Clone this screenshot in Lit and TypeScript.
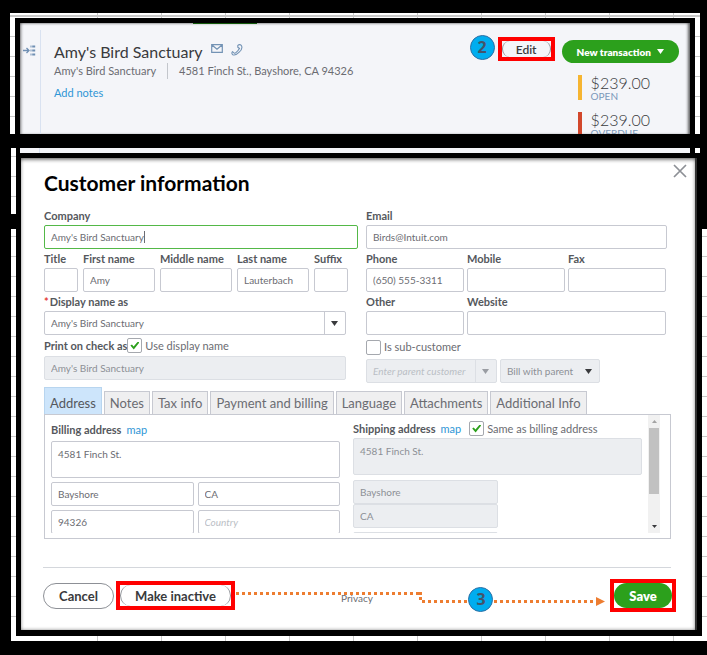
import { LitElement, html, css, svg, nothing } from "lit";
import { customElement, state } from "lit/decorators.js";
import { classMap } from "lit/directives/class-map.js";

const TABS = ["Address", "Notes", "Tax info", "Payment and billing", "Language", "Attachments", "Additional Info"];

const arrow = svg`<path d="M0 0h7L3.5 5z" fill="currentColor" />`;

@customElement("app-root")
export class AppRoot extends LitElement {
  @state() private tab = "Address";

  static styles = css`
    :host {
      display: block;
      box-sizing: border-box;
      min-height: 100vh;
      overflow: hidden;
      background: #000;
      padding: 13px 0 14px;
      font-family: Lato, "Noto Sans", sans-serif;
      font-size: 11px;
      line-height: 16px;
      color: #55585d;
    }
    *, *::before { box-sizing: border-box; }
    button, input, select, textarea { font: inherit; color: inherit; margin: 0; }
    button { cursor: pointer; padding: 0; }
    a { color: #2f96d6; text-decoration: none; }
    h1, h2, p, dl, dd, dt { margin: 0; font-weight: 400; }

    /* spreadsheet cells behind both captures */
    .sheet {
      margin: 0 7px 0 10px;
      padding: 5px 5px 0;
      background:
        linear-gradient(#c9c9c9, #c9c9c9) 0 3px / 100% 1px no-repeat,
        repeating-linear-gradient(#0000 0 19px, #c9c9c9 19px 20px) 0 4px,
        repeating-linear-gradient(90deg, #0000 0 63px, #c9c9c9 63px 64px) 24px 0,
        #fff;
    }
    .customer {
      display: flex;
      height: 116px;
      overflow: hidden;
      border: 5px solid #000;
      border-bottom: 0;
      background:
        linear-gradient(#1c7c12, #1c7c12) 173px 0 / 64px 1px no-repeat,
        #f4f5f9;
      box-shadow: inset -3px 1px 3px -1px #0009, inset 2px 0 3px -1px #0008;
    }
    .rail {
      flex: none;
      width: 21px;
      margin-top: 7px;
      padding: 15px 0 0 3px;
      border-right: 1px solid #d9e2f1;
    }
    .rail svg { display: block; }
    .who { flex: 1; padding: 18px 0 0 13px; }
    .name { display: flex; gap: 8px; }
    .name h1 { font-size: 16px; line-height: 22px; color: #393a3d; }
    .name svg { display: block; margin-top: 3px; }
    .facts { display: flex; line-height: 16px; color: #6b6c72; }
    .facts span + span { margin-left: 11px; padding-left: 11px; border-left: 1px solid #c3c6cc; }
    .notes { display: inline-block; margin-top: 6px; }
    .side { flex: none; padding: 12px 11px 0 0; }
    .actions { display: flex; align-items: flex-start; gap: 3px; }
    .badge {
      flex: none;
      width: 25px;
      height: 25px;
      border: 1px solid #2c6fa5;
      border-radius: 50%;
      background: #00adef;
      color: #44546a;
      font: 700 16px/23px "Open Sans", sans-serif;
      text-align: center;
    }
    .mark { border: 4px solid #f00; }
    .mark button { display: block; }
    .pill {
      height: 26px;
      border: 1px solid #8d9096;
      border-radius: 13px;
      background: #fff;
      color: #393a3d;
      font-size: 13px;
      font-weight: 700;
    }
    .mark.edit { margin-top: 2px; height: 24px; }
    .edit .pill { width: 49px; height: 16px; border-width: 0 1px; border-radius: 8px; background: none; font-size: 12px; line-height: 18px; font-weight: 600; }
    .pill.green { border: 0; background: #2ca01c; color: #fff; }
    .pill.new {
      display: flex;
      align-items: center;
      gap: 6px;
      height: 23px;
      margin: 5px 0 0 4px;
      padding: 0 15px;
      font-size: 10px;
      font-weight: 800;
    }
    .money { display: grid; gap: 12px; margin: 12px 0 0 108px; }
    .money div { display: flex; flex-direction: column; height: 25px; padding-left: 9px; border-left: 4px solid #f6b532; }
    .money .late { border-color: #d2472c; }
    .money dd { font-size: 16px; line-height: 16px; color: #393a3d; font-weight: 300; }
    .money dt { order: 1; font-size: 10px; line-height: 10px; color: #7b98b9; }

    .lower {
      margin: 14px 0 0 11px;
      padding-bottom: 5px;
      background:
        linear-gradient(#000, #000) 100% 0 / 12px 81px no-repeat,
        linear-gradient(#000, #000) 0 66px / 100% 15px no-repeat,
        repeating-linear-gradient(#0000 0 19px, #c9c9c9 19px 20px) 0 -11px,
        repeating-linear-gradient(90deg, #0000 0 63px, #c9c9c9 63px 64px) 23px 0,
        #fff;
    }
    .peek { display: flex; height: 5px; margin: 0 7px 0 5px; border-left: 4px solid #000; }
    .peek::before { content: ""; width: 20px; border-right: 1px solid #d9e2f1; background: #f4f5f9; }
    .peek i { flex: 1; background: #f4f5f9; border-right: 5px solid #000; }
    .peek b { width: 5px; background: #fff; }

    .modal {
      position: relative;
      margin: 0 5px;
      padding: 12px 26px 18px 23px;
      border: solid #000;
      border-width: 5px 5px 6px;
      background: #fff;
      box-shadow: inset -2px 0 #333, inset -1px 1px 4px #000b;
    }
    .modal h2 { font-size: 21px; line-height: 26px; font-weight: 700; color: #000; }
    .close { position: absolute; top: 6px; right: 10px; width: 14px; height: 14px; border: 0; background: none; }
    .close svg { display: block; }

    .form { display: grid; grid-template-columns: 314fr 301fr; gap: 8px; padding-right: 4px; margin-top: 10px; }
    .row { display: grid; column-gap: 5px; }
    .names { grid-template-columns: 34fr 72fr 72fr 72fr 34fr; margin-right: 10px; }
    .short { margin-right: 12px; }
    .three { grid-template-columns: repeat(3, 1fr); column-gap: 3px; margin-right: 1px; }
    .wide { grid-column: span 2; }
    .field { display: block; min-width: 0; font-weight: 700; white-space: nowrap; }
    .field > span { display: block; line-height: 19px; }
    .req::before { content: "*"; margin-right: 1px; color: #e43834; }
    input:not([type]), select, textarea {
      display: block;
      width: 100%;
      min-width: 0;
      height: 24px;
      padding: 0 6px;
      border: 1px solid #c7c9d1;
      border-radius: 2px;
      background: #fff;
      color: #6b6c72;
      font-size: 10px;
      font-weight: 400;
      outline: 0;
      appearance: none;
      resize: none;
    }
    textarea { height: 37px; padding: 5px 6px; line-height: 14px; overflow: hidden; }
    input.active { border-color: #53b847; }
    input:not([type]):disabled, select:disabled, textarea:disabled {
      border-color: #dcdfe4;
      background: #eceef1;
      color: #8d9096;
      opacity: 1;
    }
    ::placeholder { color: #babec5; font-style: italic; opacity: 1; }
    .caret { display: block; position: relative; }
    .caret::after {
      content: "";
      position: absolute;
      inset: 6px auto 6px 100px;
      border-left: 1px solid #6b6c72;
    }
    .combo { display: flex; position: relative; color: #393a3d; }
    .combo svg { position: absolute; right: 8px; top: 10px; pointer-events: none; }
    .combo::after { content: ""; position: absolute; inset: 1px 21px 1px auto; border-left: 1px solid #c7c9d1; }
    .combo.plain::after { display: none; }
    .combo.off { color: #9a9da3; }
    .combo.off::after { border-color: #dcdfe4; }
    .line { display: flex; align-items: center; white-space: nowrap; }
    .print { height: 21px; }
    .print label:first-child { font-weight: 700; }
    .tick { display: flex; align-items: center; gap: 3px; color: #6b6c72; }
    .tick input {
      display: grid;
      place-items: center;
      width: 15px;
      height: 15px;
      margin: 0;
      border: 1px solid #a5a8ae;
      border-radius: 2px;
      background: #fff;
      appearance: none;
    }
    .tick input:checked::before {
      content: "";
      width: 9px;
      height: 8px;
      background: #2ca01c;
      clip-path: polygon(0 50%, 18% 36%, 36% 62%, 84% 0, 100% 14%, 38% 100%);
    }
    .sub { height: 24px; }
    .parents { display: grid; grid-template-columns: 131fr 100fr; gap: 3px; margin-right: 67px; }

    .tabs { display: flex; align-items: flex-end; gap: 2px; height: 27px; margin-top: 4px; }
    .tab {
      height: 23px;
      padding: 0 5px;
      border: 1px solid #c7c9d1;
      border-bottom: 0;
      background: #efeff0;
      color: #6b6c72;
      font-size: 13px;
      line-height: 22px;
      white-space: nowrap;
    }
    .tab.on { height: 27px; padding-top: 4px; background: #cde5fb; border-color: #b8d5ef; color: #55585d; }
    .panel { padding: 0 10px 5px 6px; border: 1px solid #c7c9d1; }
    .view { display: grid; grid-template-columns: 302fr 295fr 12px; height: 118px; overflow: hidden; }
    .col { display: grid; grid-template-columns: minmax(0, 1fr); align-content: start; min-width: 0; margin-right: 6px; }
    .bill { margin-right: 13px; row-gap: 4px; padding-top: 4px; }
    .title { height: 22px; gap: 5px; margin-bottom: -4px; }
    .title > label { font-weight: 700; }
    .pair { display: grid; grid-template-columns: 1fr 1fr; gap: 4px; }
    .ship { padding-top: 4px; }
    .ship .title { height: 19px; margin: 0; }
    .ship .tick { margin-left: 3px; font-weight: 400; }
    .half { display: grid; width: 50%; margin-top: 5px; }
    .half + .half { margin-top: 4px; }
    .scroll { display: flex; flex-direction: column; align-items: center; height: 118px; padding: 5px 0; background: #f1f1f1; color: #a3a3a3; }
    .scroll i { width: 10px; height: 66px; margin: 5px 0 auto; background: #c1c1c1; }
    .scroll svg + i + svg { color: #393a3d; }

    .foot {
      position: relative;
      display: grid;
      grid-template-columns: 1fr auto 1fr;
      align-items: center;
      margin: 28px 0 0 -1px;
      padding-top: 12px;
    }
    .foot::before { content: ""; position: absolute; inset: 0 0 auto; border-top: 1px solid #d4d7dc; }
    .left { display: flex; align-items: center; gap: 2px; }
    .cancel { width: 71px; }
    .idle .pill { width: 111px; height: 21px; border-width: 0 1px; line-height: 20px; }
    .privacy { color: #6b6c72; font-size: 10px; margin-top: 4px; }
    .save { justify-self: end; margin-right: -5px; }
    .save .pill { width: 58px; height: 25px; font-weight: 800; }
    .path { position: absolute; inset: 25px 66px auto 193px; display: flex; color: #ed7d31; }
    .path i { flex: 184; height: 3px; background: repeating-linear-gradient(90deg, currentColor 0 3px, #0000 3px 6px); }
    .path .drop { flex: none; width: 3px; height: 8px; background: repeating-linear-gradient(currentColor 0 3px, #0000 3px 5px); }
    .path .low { flex: 174; margin-top: 8px; }
    .path svg { margin-top: 5px; }
    .path .badge { position: absolute; top: -5px; left: 63%; }
  `;

  private field(label: string, value = "", cls = "") {
    return html`<label class="field ${cls}"><span>${label}</span><input .value=${value} /></label>`;
  }

  private arrow(w = 7) {
    return html`<svg width=${w} height="5" viewBox="0 0 7 5" aria-hidden="true">${arrow}</svg>`;
  }

  private renderCustomer() {
    return html`
      <div class="sheet">
        <section class="customer">
          <div class="rail">
            <svg width="13" height="11" viewBox="0 0 13 11" fill="none" stroke="#6f8fb3" aria-hidden="true">
              <path stroke-width="1.300" d="M0 5.500h5.500M3.500 3l2.500 2.500L3.500 8" />
              <path stroke-width="2" d="M7.500 1.500h1M9.200 1.500h3M7.500 5.500h1M9.200 5.500h3M7.500 9.500h1M9.200 9.500h3" />
            </svg>
          </div>
          <div class="who">
            <div class="name">
              <h1>Amy's Bird Sanctuary</h1>
              <svg width="12" height="9" viewBox="0 0 12 9" fill="none" stroke="#7393b5" stroke-width="1.200" aria-hidden="true">
                <path d="M.7.7h10.600v7.600H.7zM1 1l5 4.200L11 1" />
              </svg>
              <svg width="12" height="12" viewBox="0 0 12 12" fill="none" stroke="#7393b5" stroke-width="1.100" stroke-linejoin="round" aria-hidden="true">
                <path d="M6.800 1.300C8 .3 9.800.4 10.500 1.700c1 2-.2 4.500-2.300 6.500-2 2-4.500 3.400-6.400 2.500C.6 10 .6 8.700 1.500 7.600l2 1.700c.6.3 3.900-2.600 4.200-4L8.600 4.500 6.800 3.200z" />
              </svg>
            </div>
            <p class="facts"><span>Amy's Bird Sanctuary</span><span>4581 Finch St., Bayshore, CA 94326</span></p>
            <a class="notes" href="#notes">Add notes</a>
          </div>
          <div class="side">
            <div class="actions">
              <span class="badge">2</span>
              <div class="mark edit"><button class="pill">Edit</button></div>
              <button class="pill green new">New transaction ${this.arrow()}</button>
            </div>
            <dl class="money">
              <div><dt>OPEN</dt><dd>$239.00</dd></div>
              <div class="late"><dt>OVERDUE</dt><dd>$239.00</dd></div>
            </dl>
          </div>
        </section>
      </div>
    `;
  }

  private renderAddress() {
    return html`
      <div class="view">
        <div class="col bill">
          <div class="line title"><label for="bill">Billing address</label><a href="#map">map</a></div>
          <textarea id="bill" .value=${"4581 Finch St."}></textarea>
          <div class="pair">
            <input aria-label="City" .value=${"Bayshore"} />
            <input aria-label="State" .value=${"CA"} />
            <input aria-label="ZIP" .value=${"94326"} />
            <input aria-label="Country" placeholder="Country" />
          </div>
        </div>
        <div class="col ship">
          <div class="line title">
            <label for="ship">Shipping address</label><a href="#map">map</a>
            <label class="tick"><input type="checkbox" checked />Same as billing address</label>
          </div>
          <textarea id="ship" disabled .value=${"4581 Finch St."}></textarea>
          <div class="half">
            <input aria-label="Shipping city" disabled .value=${"Bayshore"} />
            <input aria-label="Shipping state" disabled .value=${"CA"} />
          </div>
          <div class="half"><input aria-label="Shipping ZIP" disabled /></div>
        </div>
        <div class="scroll">
          <svg width="5" height="3" viewBox="0 0 5 3"><path d="M0 3h5L2.500 0z" fill="currentColor" /></svg>
          <i></i>
          <svg width="5" height="3" viewBox="0 0 5 3"><path d="M0 0h5L2.500 3z" fill="currentColor" /></svg>
        </div>
      </div>
    `;
  }

  render() {
    return html`
      ${this.renderCustomer()}
      <div class="lower">
        <div class="peek"><i></i><b></b></div>
        <section class="modal" role="dialog" aria-labelledby="heading">
          <h2 id="heading">Customer information</h2>
          <button class="close" aria-label="Close">
            <svg width="14" height="14" viewBox="0 0 14 14" stroke="#8d9096" stroke-width="1.700"><path d="M1 1l12 12M13 1L1 13" /></svg>
          </button>

          <div class="form">
            <div>
              <label class="field"><span>Company</span>
                <span class="caret"><input class="active" .value=${"Amy's Bird Sanctuary"} /></span>
              </label>
              <div class="row names">
                ${this.field("Title")} ${this.field("First name", "Amy")} ${this.field("Middle name")}
                ${this.field("Last name", "Lauterbach")} ${this.field("Suffix")}
              </div>
              <div class="short">
                <label class="field"><span class="req">Display name as</span>
                  <div class="combo">
                    <select><option>Amy's Bird Sanctuary</option></select>${this.arrow()}
                  </div>
                </label>
                <div class="line print">
                  <label for="check">Print on check as</label>
                  <label class="tick"><input type="checkbox" checked />Use display name</label>
                </div>
                <input id="check" disabled .value=${"Amy's Bird Sanctuary"} />
              </div>
            </div>
            <div>
              ${this.field("Email", "Birds@Intuit.com")}
              <div class="row three">
                ${this.field("Phone", "(650) 555-3311")} ${this.field("Mobile")} ${this.field("Fax")}
                ${this.field("Other")} ${this.field("Website", "", "wide")}
              </div>
              <div class="line sub"><label class="tick"><input type="checkbox" />Is sub-customer</label></div>
              <div class="parents">
                <div class="combo off">
                  <input disabled aria-label="Parent customer" placeholder="Enter parent customer" />${this.arrow()}
                </div>
                <div class="combo plain">
                  <select disabled aria-label="Billing"><option>Bill with parent</option></select>${this.arrow()}
                </div>
              </div>
            </div>
          </div>

          <div class="tabs" role="tablist">
            ${TABS.map(
              (t) => html`<button
                role="tab"
                aria-selected=${t === this.tab}
                class=${classMap({ tab: true, on: t === this.tab })}
                @click=${() => (this.tab = t)}
              >${t}</button>`
            )}
          </div>
          <div class="panel" role="tabpanel">${this.tab === "Address" ? this.renderAddress() : nothing}</div>

          <footer class="foot">
            <div class="left">
              <button class="pill cancel">Cancel</button>
              <div class="mark idle"><button class="pill">Make inactive</button></div>
            </div>
            <a class="privacy" href="#privacy">Privacy</a>
            <div class="mark save"><button class="pill green">Save</button></div>
            <div class="path">
              <i></i><i class="drop"></i><i class="low"></i>
              <svg width="9" height="9" viewBox="0 0 9 9" aria-hidden="true"><path d="M0 0l9 4.500L0 9z" fill="currentColor" /></svg>
              <span class="badge">3</span>
            </div>
          </footer>
        </section>
      </div>
    `;
  }
}
